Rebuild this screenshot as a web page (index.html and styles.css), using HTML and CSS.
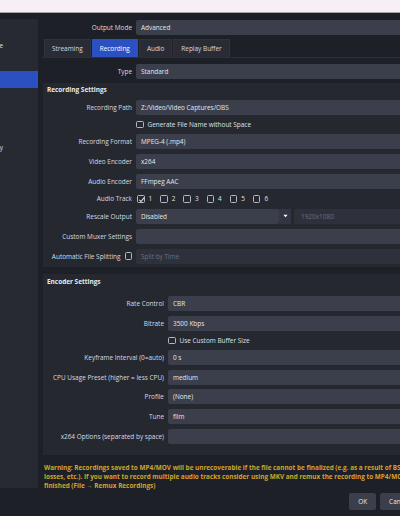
FILE: index.html
```html
<!DOCTYPE html>
<html lang="en">
<head>
    <meta charset="UTF-8">
    <meta name="viewport" content="width=device-width, initial-scale=1.0">
    <title>Settings - Output</title>
    <link rel="stylesheet" href="styles.css">
</head>
<body>
    <div class="titlebar"></div>

    <div class="window">
        <div class="body-row">
            <ul class="nav">
                <li><span>General</span></li>
                <li><span>Appearance</span></li>
                <li><span>Stream</span></li>
                <li class="active"><span>Output</span></li>
                <li><span>Audio</span></li>
                <li><span>Video</span></li>
                <li><span>Hotkeys</span></li>
                <li><span>Accessibility</span></li>
                <li><span>Advanced</span></li>
            </ul>

            <div class="main">
                <div class="form top-form">
                    <label>Output Mode</label>
                    <div class="field">Advanced</div>
                </div>

                <div class="tabs">
                    <div class="tab">Streaming</div>
                    <div class="tab active">Recording</div>
                    <div class="tab">Audio</div>
                    <div class="tab">Replay Buffer</div>
                </div>

                <div class="tab-pane">
                    <div class="form">
                        <label>Type</label>
                        <div class="field">Standard</div>
                    </div>

                    <div class="group rec-group">
                        <div class="group-title">Recording Settings</div>
                        <div class="form">
                            <label>Recording Path</label>
                            <div class="field">Z:/Video/Video Captures/OBS</div>

                            <div class="check-row"><span class="cb"></span>Generate File Name without Space</div>

                            <label>Recording Format</label>
                            <div class="field">MPEG-4 (.mp4)</div>

                            <label>Video Encoder</label>
                            <div class="field">x264</div>

                            <label>Audio Encoder</label>
                            <div class="field">FFmpeg AAC</div>

                            <label class="short">Audio Track</label>
                            <div class="tracks">
                                <span class="cb checked"><svg viewBox="0 0 8 8"><path d="M1.5 4.2 L3.2 5.9 L6.6 1.8" /></svg></span>1
                                <span class="cb"></span>2
                                <span class="cb"></span>3
                                <span class="cb"></span>4
                                <span class="cb"></span>5
                                <span class="cb"></span>6
                            </div>

                            <label>Rescale Output</label>
                            <div class="rescale">
                                <div class="field select">Disabled</div>
                                <div class="arrow"><svg viewBox="0 0 6 4"><path d="M0.5 0.5 H5.5 L3 3.5 Z" /></svg></div>
                                <div class="field disabled res">1920x1080</div>
                            </div>

                            <label>Custom Muxer Settings</label>
                            <div class="field"></div>

                            <label>Automatic File Splitting <span class="cb"></span></label>
                            <div class="field disabled">Split by Time</div>
                        </div>
                    </div>

                    <div class="group enc-group">
                        <div class="group-title">Encoder Settings</div>
                        <div class="form">
                            <label>Rate Control</label>
                            <div class="field">CBR</div>

                            <label>Bitrate</label>
                            <div class="field">3500 Kbps</div>

                            <div class="check-row"><span class="cb"></span>Use Custom Buffer Size</div>

                            <label>Keyframe Interval (0=auto)</label>
                            <div class="field">0 s</div>

                            <label>CPU Usage Preset (higher = less CPU)</label>
                            <div class="field">medium</div>

                            <label>Profile</label>
                            <div class="field">(None)</div>

                            <label>Tune</label>
                            <div class="field">film</div>

                            <label>x264 Options (separated by space)</label>
                            <div class="field"></div>
                        </div>
                    </div>
                </div>

                <p class="warning">Warning: Recordings saved to MP4/MOV will be unrecoverable if the file cannot be finalized (e.g. as a result of BSODs, power<br>losses, etc.). If you want to record multiple audio tracks consider using MKV and remux the recording to MP4/MOV after it is<br>finished (File &rarr; Remux Recordings)</p>
            </div>
        </div>

        <div class="buttons">
            <button class="btn">OK</button>
            <button class="btn">Cancel</button>
        </div>
    </div>
</body>
</html>
```

FILE: styles.css
```css
html, body {
    margin: 0;
    padding: 0;
}

body {
    background-color: #1e2027;
    font-family: "Open Sans", "Liberation Sans", sans-serif;
    font-size: 6.45px;
    color: #dfe1e6;
    width: 400px;
    height: 516px;
    overflow: hidden;
}

.titlebar {
    height: 12px;
    background-color: #f6eff5;
    border-bottom: 1px solid #a8a5a9;
}

.window {
    width: 426px;
    background-color: #1e2027;
}

.body-row {
    display: flex;
    height: 476px;
}

/* left settings list */
.nav {
    list-style: none;
    margin: 6px 4px 0 0;
    padding: 1px 0 0 0;
    width: 38px;
    height: 468px;
    background-color: #272a33;
    overflow: hidden;
    flex-shrink: 0;
}

.nav li {
    height: 17px;
    line-height: 17px;
    white-space: nowrap;
}

.nav li span {
    display: inline-block;
    margin-left: -33px;
}

.nav li.active {
    background-color: #2b50c2;
}

.main {
    flex: 1;
    min-width: 0;
}

/* label / field grid */
.form {
    display: grid;
    grid-template-columns: 89px 1fr;
    column-gap: 4px;
    row-gap: 5px;
    align-items: center;
}

.top-form {
    grid-template-columns: 90px 1fr;
    margin-top: 7px;
}

.form label {
    text-align: right;
    white-space: nowrap;
    color: #d8dae0;
    display: flex;
    justify-content: flex-end;
    align-items: center;
    gap: 4px;
}

.field {
    height: 15px;
    line-height: 15px;
    background-color: #3b3e4b;
    border-radius: 2px;
    padding-left: 5px;
    white-space: nowrap;
    color: #e6e7ea;
}

.field.disabled {
    background-color: #2e313b;
    color: #6b6f7a;
}

.tabs {
    display: flex;
    gap: 1px;
    margin: 4px 0 0 2px;
}

.tab {
    height: 18px;
    line-height: 18px;
    padding: 0 7px;
    background-color: #292c35;
    border: 1px solid #30333d;
    border-bottom: none;
    box-sizing: border-box;
    color: #d8dae0;
}

.tab.active {
    background-color: #2b50c2;
    border-color: #2b50c2;
    color: #ffffff;
}

.tab-pane {
    border-top: 1px solid #2c2f38;
    padding: 6px 0 0 1px;
}

.group {
    background-color: #262830;
    margin-top: 4px;
}

.rec-group {
    padding: 2px 0 3px 0;
}

.enc-group {
    margin-top: 7.5px;
    padding: 2.5px 0 10.75px 0;
}

.enc-group .form {
    grid-template-columns: 121px 1fr;
    row-gap: 4.75px;
}

.group-title {
    font-weight: bold;
    height: 10px;
    line-height: 10px;
    padding-left: 4px;
    margin-bottom: 4.5px;
    color: #e8e9ec;
}

.enc-group .group-title {
    margin-bottom: 9.5px;
}

.check-row {
    grid-column: 2;
    height: 9.5px;
    display: flex;
    align-items: center;
    gap: 4px;
    white-space: nowrap;
}

.cb {
    display: inline-block;
    width: 7.5px;
    height: 7.5px;
    border: 1px solid #b4b8c2;
    border-radius: 1.5px;
    box-sizing: border-box;
    position: relative;
}

.cb svg {
    position: absolute;
    left: -0.5px;
    top: -0.5px;
    width: 7.5px;
    height: 7.5px;
    fill: none;
    stroke: #e6e7ea;
    stroke-width: 1.1;
}

.tracks {
    height: 9.5px;
    display: flex;
    align-items: center;
    gap: 4px;
    padding-left: 1px;
}

.tracks .cb {
    margin-left: 4px;
}

.tracks .cb:first-child {
    margin-left: 0;
}

.rescale {
    display: flex;
    align-items: center;
}

.rescale .select {
    width: 138px;
    flex-shrink: 0;
}

.arrow {
    width: 12px;
    height: 15px;
    background-color: #333642;
    display: flex;
    align-items: center;
    justify-content: center;
}

.arrow svg {
    width: 5px;
    height: 4px;
    fill: #ffffff;
}

.rescale .res {
    flex: 1;
    margin-left: 3px;
    padding-left: 7px;
}

.warning {
    margin: 8px 0 0 2px;
    font-weight: bold;
    font-size: 6.38px;
    line-height: 9px;
    color: #d2a42b;
    white-space: nowrap;
}

.buttons {
    display: flex;
    justify-content: flex-end;
    gap: 4px;
    margin-top: 4px;
    padding-right: 8px;
}

.btn {
    height: 17px;
    padding: 0 9px;
    min-width: 26px;
    background-color: #3b3e4b;
    border: none;
    border-radius: 2px;
    color: #e6e7ea;
    font-family: "Open Sans", "Liberation Sans", sans-serif;
    font-size: 6.45px;
}
```
